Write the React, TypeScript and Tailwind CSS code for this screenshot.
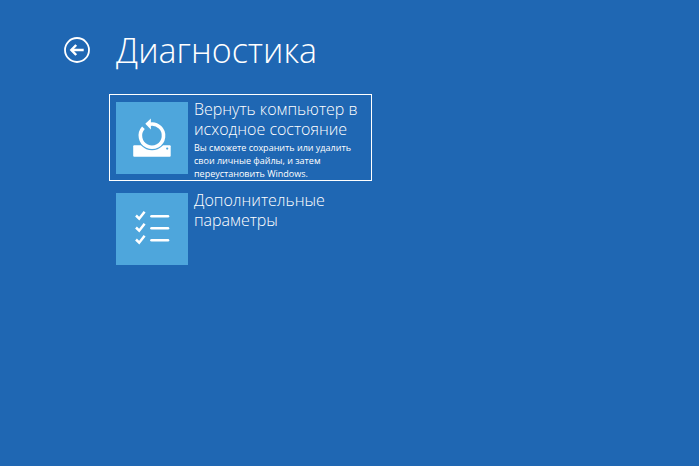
import React from "react";

interface OptionProps {
  title: string;
  description?: string;
  selected?: boolean;
  icon: React.ReactNode;
}

function BackIcon() {
  return (
    <svg viewBox="0 0 26 26" className="h-[26px] w-[26px]" fill="none" stroke="currentColor" aria-hidden="true">
      <circle cx="13" cy="13" r="12" strokeWidth="1.8" />
      <path d="M19.7 13H7.5" strokeWidth="2.5" />
      <path d="M12.2 8L7.4 13l4.8 5" strokeWidth="2.5" />
    </svg>
  );
}

function ResetIcon() {
  return (
    <svg viewBox="0 0 72 72" className="h-full w-full" aria-hidden="true">
      <rect x="17.2" y="43.3" width="37.5" height="11.4" rx="1" fill="#fff" />
      <circle cx="36" cy="33.6" r="14.6" fill="#4ea6dc" />
      <circle cx="51.2" cy="46.6" r="1.1" fill="#4ea6dc" />
      <path d="M27.4 25.8A11.6 11.6 0 1 0 34 22.2" fill="none" stroke="#fff" strokeWidth="3.6" />
      <path d="M29.3 21.8l5.6-5.4v11z" fill="#fff" />
    </svg>
  );
}

function ChecklistIcon() {
  return (
    <svg viewBox="0 0 72 72" className="h-full w-full" fill="none" stroke="#fff" aria-hidden="true">
      {[23, 35, 47].map((y) => (
        <g key={y} transform={`translate(0 ${y})`}>
          <path d="M20 -0.5l3.2 3.2l5.4-7" strokeWidth="2.5" />
          <path d="M35.5 0.3h16.5" strokeWidth="2.6" strokeLinecap="round" />
        </g>
      ))}
    </svg>
  );
}

function Option({ title, description, selected, icon }: OptionProps) {
  return (
    <button
      type="button"
      className={`flex w-full max-w-[263px] items-start gap-1.5 border pl-1.5 text-left ${
        selected ? "border-white" : "border-transparent"
      }`}
    >
      <span className="mt-[7px] mb-1.5 block h-[72px] w-[72px] shrink-0 bg-[#4ea6dc]">{icon}</span>
      <span className="block min-w-0 flex-1 pt-1">
        <span className="block pr-1 text-[16px] leading-5 font-light">{title}</span>
        {description && (
          <span className="mt-0.5 block pr-4 text-[9px] leading-[13px]">{description}</span>
        )}
      </span>
    </button>
  );
}

export default function App() {
  return (
    <main className="min-h-screen bg-[#1f67b3] px-16 pt-7 font-['Open_Sans','Noto_Sans',sans-serif] text-white">
      <header className="flex items-center gap-[26px]">
        <button type="button" aria-label="Назад" className="shrink-0">
          <BackIcon />
        </button>
        <h1 className="text-[34px] leading-[44px] font-light">Диагностика</h1>
      </header>

      <div className="mt-[22px] ml-[45px] flex flex-col gap-1">
        <Option
          selected
          title="Вернуть компьютер в исходное состояние"
          description="Вы сможете сохранить или удалить свои личные файлы, и затем переустановить Windows."
          icon={<ResetIcon />}
        />
        <Option title="Дополнительные параметры" icon={<ChecklistIcon />} />
      </div>
    </main>
  );
}
